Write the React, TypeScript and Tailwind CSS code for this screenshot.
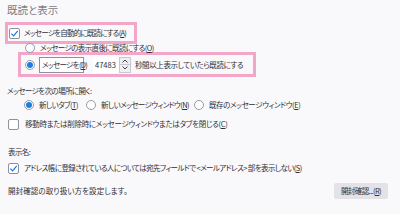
import type { ReactNode } from "react"

const Check = ({ checked = false }: { checked?: boolean }) => (
  <span className="w-[11px] h-[11px] shrink-0 bg-white border border-[#8f8f9d] rounded-[2px] flex items-center justify-center">
    {checked && (
      <svg width="9" height="9" viewBox="0 0 10 10">
        <path d="M1.5 5.2 L4 7.6 L8.6 2" fill="none" stroke="#1a73e8" strokeWidth="1.3" />
      </svg>
    )}
  </span>
)

const Radio = ({ on = false }: { on?: boolean }) => (
  <span className="w-[10px] h-[10px] shrink-0 bg-white border border-[#9a9aa6] rounded-full flex items-center justify-center">
    {on && <span className="w-[6px] h-[6px] rounded-full bg-[#1a7fe0]" />}
  </span>
)

const Key = ({ k }: { k: string }) => (
  <>
    (<span className="underline">{k}</span>)
  </>
)

const Label = ({ children, className = "" }: { children: ReactNode; className?: string }) => (
  <span className={`whitespace-nowrap ${className}`}>{children}</span>
)

export default function App() {
  return (
    <div
      className="w-[400px] h-[214px] overflow-hidden bg-[#f9f9fb] text-[#2f2f36] text-[7.5px] leading-none tracking-[-0.6px] [font-family:'Noto_Sans_CJK_JP','Noto_Sans',sans-serif]"
      style={{ fontFeatureSettings: '"palt" 1' }}
    >
      {/* Heading */}
      <div className="h-[20px] pl-[7px] flex items-center text-[10.5px] tracking-normal text-[#7d7d85]">既読と表示</div>

      {/* Auto mark read */}
      <div className="ml-[5px] mt-[2px] w-[132px] h-[22px] border-[3px] border-[#f2a7c8] flex items-center gap-[4px] pl-[1px]">
        <Check checked />
        <Label className="tracking-[-0.8px]">
          メッセージを自動的に既読にする<Key k="A" />
        </Label>
      </div>

      <div className="h-[8px] pl-[25px] flex items-center gap-[5px]">
        <Radio />
        <Label>
          メッセージの表示直後に既読にする<Key k="O" />
        </Label>
      </div>

      <div className="ml-[18px] w-[238px] h-[25px] border-[3px] border-[#f2a7c8] flex items-center pl-[4px]">
        <Radio on />
        <div className="ml-[4px] w-[45px] h-[16px] bg-white border border-[#8f8f9d] flex items-center pl-[2px]">
          <Label className="tracking-[-0.7px]">
            メッセージを<Key k="D" />
          </Label>
        </div>
        <div className="ml-[9px] w-[38px] h-[16px] bg-white flex items-center">
          <span className="flex-1 pl-[2px] tracking-normal">47483</span>
          <div className="w-[12px] h-full flex flex-col border border-[#c8c8d0] bg-[#f0f0f4]">
            <div className="flex-1 flex items-center justify-center border-b border-[#c8c8d0]">
              <svg width="6" height="4" viewBox="0 0 6 4">
                <path d="M0.5 3.5 L3 1 L5.5 3.5" fill="none" stroke="#444" strokeWidth="1" />
              </svg>
            </div>
            <div className="flex-1 flex items-center justify-center">
              <svg width="6" height="4" viewBox="0 0 6 4">
                <path d="M0.5 0.5 L3 3 L5.5 0.5" fill="none" stroke="#444" strokeWidth="1" />
              </svg>
            </div>
          </div>
        </div>
        <span className="ml-[4px]">
          <Label className="tracking-[-0.4px]">秒間以上表示していたら既読にする</Label>
        </span>
      </div>

      {/* Open location */}
      <div className="mt-[8px] h-[12px] pl-[7px] flex items-center">
        <Label>メッセージを次の場所に開く:</Label>
      </div>
      <div className="mt-[1px] h-[14px] pl-[24px] flex items-center">
        <Radio on />
        <span className="ml-[5px] w-[47px] shrink-0">
          <Label>
            新しいタブ<Key k="T" />
          </Label>
        </span>
        <Radio />
        <span className="ml-[5px] w-[93px] shrink-0">
          <Label>
            新しいメッセージウィンドウ<Key k="N" />
          </Label>
        </span>
        <Radio />
        <span className="ml-[5px]">
          <Label className="tracking-[-0.4px]">
            既存のメッセージウィンドウ<Key k="E" />
          </Label>
        </span>
      </div>
      <div className="mt-[5px] h-[14px] pl-[8px] flex items-center gap-[6px]">
        <Check />
        <Label className="tracking-[-0.3px]">
          移動時または削除時にメッセージウィンドウまたはタブを閉じる<Key k="C" />
        </Label>
      </div>

      {/* Display name */}
      <div className="mt-[15px] h-[12px] pl-[8px] flex items-center">
        <Label>表示名:</Label>
      </div>
      <div className="mt-[3px] h-[14px] pl-[8px] flex items-center gap-[5px]">
        <Check checked />
        <Label>
          アドレス帳に登録されている人については宛先フィールドで &lt;メールアドレス&gt; 部を表示しない<Key k="S" />
        </Label>
      </div>

      {/* Return receipts */}
      <div className="mt-[8px] h-[16px] pl-[8px] pr-[12px] flex items-center justify-between">
        <Label className="tracking-[0.1px]">開封確認の取り扱い方を設定します。</Label>
        <button className="w-[54px] h-[16px] bg-[#e2e2e7] rounded-[2px] flex items-center justify-center text-[#2f2f36]">
          開封確認...<Key k="R" />
        </button>
      </div>
    </div>
  )
}
